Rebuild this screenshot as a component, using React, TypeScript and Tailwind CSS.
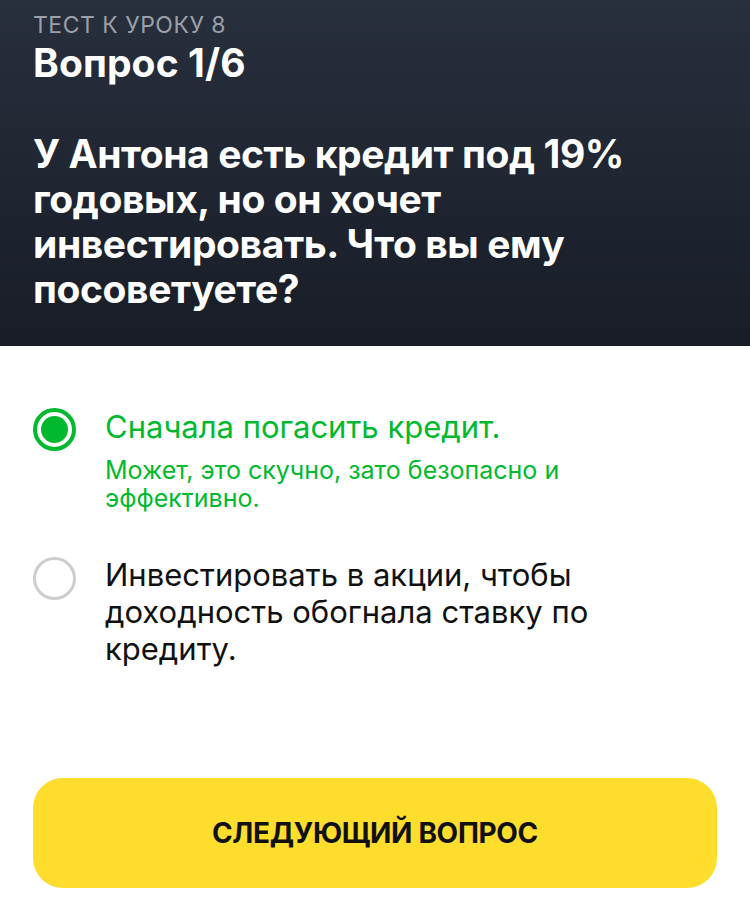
import React from "react";

export default function App() {
  const font = { fontFamily: '"Inter", "Roboto", "Liberation Sans", sans-serif' };
  return (
    <div className="w-[750px] h-[908px] bg-white flex flex-col" style={font}>
      <div className="bg-gradient-to-b from-[#282f3d] to-[#181d27] px-[33px] pt-[11px] h-[346px]">
        <div className="text-[23px] leading-[28px] text-[#9ca0a8] tracking-[0.5px]">ТЕСТ К УРОКУ 8</div>
        <div className="text-[39px] leading-[46px] font-bold text-white mt-[1px] tracking-[0.1px]">Вопрос 1/6</div>
        <div className="text-[39px] leading-[45px] font-bold text-white mt-[45px] tracking-[-0.4px]">
          У Антона есть кредит под 19% годовых, но он хочет инвестировать. Что вы ему посоветуете?
        </div>
      </div>
      <div className="flex-1 flex flex-col px-[33px]">
        <div className="flex flex-row gap-[29px] mt-[62px]">
          <div className="w-[43px] h-[43px] shrink-0 rounded-full border-[4px] border-[#00b92e] flex items-center justify-center mt-[0px]">
            <div className="w-[27px] h-[27px] rounded-full bg-[#00b92e]" />
          </div>
          <div className="flex flex-col">
            <div className="text-[31px] leading-[38px] text-[#00b92e]">Сначала погасить кредит.</div>
            <div className="text-[25px] leading-[28px] text-[#00b92e] mt-[10px] pr-[120px]">
              Может, это скучно, зато безопасно и эффективно.
            </div>
          </div>
        </div>
        <div className="flex flex-row gap-[29px] mt-[44px]">
          <div className="w-[43px] h-[43px] shrink-0 rounded-full border-[3px] border-[#cdcdcf] mt-[1px]" />
          <div className="text-[31px] leading-[37px] text-[#111] pr-[100px]">
            Инвестировать в акции, чтобы доходность обогнала ставку по кредиту.
          </div>
        </div>
        <div className="mt-auto mb-[20px] h-[110px] rounded-[30px] bg-[#ffdd2d] flex items-center justify-center">
          <span className="text-[28px] font-bold text-[#111] tracking-[-0.3px]">СЛЕДУЮЩИЙ ВОПРОС</span>
        </div>
      </div>
    </div>
  );
}
